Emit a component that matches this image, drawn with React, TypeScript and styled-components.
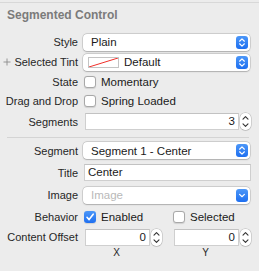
import React from "react"
import styled, { createGlobalStyle } from "styled-components"

const GlobalStyle = createGlobalStyle`
  html, body {
    margin: 0;
    padding: 0;
    background: #ececec;
    font-family: "Liberation Sans", Arial, sans-serif;
    -webkit-font-smoothing: antialiased;
  }
`

const Chevrons = ({ single }: { single?: boolean }) => (
  <svg width="12" height="13" viewBox="0 0 12 13">
    {!single && (
      <path d="M3.6 5.2 L6 2.9 L8.4 5.2" fill="none" stroke="#fff" strokeWidth="1.2" strokeLinecap="round" strokeLinejoin="round" />
    )}
    <path
      d={single ? "M3.6 5.4 L6 7.7 L8.4 5.4" : "M3.6 7.8 L6 10.1 L8.4 7.8"}
      fill="none"
      stroke="#fff"
      strokeWidth="1.2"
      strokeLinecap="round"
      strokeLinejoin="round"
    />
  </svg>
)

const StepperArrows = () => (
  <svg width="11" height="17" viewBox="0 0 11 17">
    <path d="M3 6.2 L5.5 3.7 L8 6.2" fill="none" stroke="#333" strokeWidth="1.1" strokeLinecap="round" strokeLinejoin="round" />
    <path d="M3 10.8 L5.5 13.3 L8 10.8" fill="none" stroke="#333" strokeWidth="1.1" strokeLinecap="round" strokeLinejoin="round" />
  </svg>
)

const PlusIcon = () => (
  <svg width="8" height="8" viewBox="0 0 8 8">
    <path d="M4 0.5 V7.5 M0.5 4 H7.5" stroke="#8c8c8c" strokeWidth="0.9" />
  </svg>
)

const CheckMark = () => (
  <svg width="12" height="12" viewBox="0 0 12 12">
    <path d="M3 6.3 L5.1 8.6 L9.2 3.2" fill="none" stroke="#fff" strokeWidth="1.6" strokeLinecap="round" strokeLinejoin="round" />
  </svg>
)

const TintSwatch = () => (
  <Swatch>
    <svg width="29" height="9" viewBox="0 0 29 9">
      <line x1="0" y1="9" x2="29" y2="0" stroke="#f0302a" strokeWidth="1" />
    </svg>
  </Swatch>
)

const Popup = ({ children, combo, placeholder }: { children: React.ReactNode; combo?: boolean; placeholder?: boolean }) => (
  <PopupBox $placeholder={placeholder}>
    <PopupText>{children}</PopupText>
    <Indicator>
      <Chevrons single={combo} />
    </Indicator>
  </PopupBox>
)

const Checkbox = ({ checked, label }: { checked?: boolean; label: string }) => (
  <CheckRow>
    <Box $checked={checked}>{checked && <CheckMark />}</Box>
    <span>{label}</span>
  </CheckRow>
)

const NumberField = ({ value }: { value: string }) => (
  <FieldGroup>
    <TextField $align="right">{value}</TextField>
    <Stepper>
      <StepperArrows />
    </Stepper>
  </FieldGroup>
)

const App = () => (
  <>
    <GlobalStyle />
    <Panel>
      <Header>Segmented Control</Header>

      <Row $h={20}>
        <Label>Style</Label>
        <Popup>Plain</Popup>
      </Row>
      <Row $h={20}>
        <Label>
          <PlusIcon />
          Selected Tint
        </Label>
        <Popup>
          <TintSwatch />
          Default
        </Popup>
      </Row>
      <Row $h={19}>
        <Label>State</Label>
        <Checkbox label="Momentary" />
      </Row>
      <Row $h={20}>
        <Label>Drag and Drop</Label>
        <Checkbox label="Spring Loaded" />
      </Row>
      <Row $h={21}>
        <Label>Segments</Label>
        <NumberField value="3" />
      </Row>

      <Separator />

      <Row $h={21}>
        <Label>Segment</Label>
        <Popup>Segment 1 - Center</Popup>
      </Row>
      <Row $h={23}>
        <Label>Title</Label>
        <TextField>Center</TextField>
      </Row>
      <Row $h={22}>
        <Label>Image</Label>
        <Popup combo placeholder>
          Image
        </Popup>
      </Row>
      <Row $h={21}>
        <Label>Behavior</Label>
        <Pair>
          <Checkbox checked label="Enabled" />
          <Checkbox label="Selected" />
        </Pair>
      </Row>
      <Row $h={20}>
        <Label>Content Offset</Label>
        <Pair>
          <NumberField value="0" />
          <NumberField value="0" />
        </Pair>
      </Row>
      <Row $h={10}>
        <span />
        <Pair>
          <AxisLabel>X</AxisLabel>
          <AxisLabel>Y</AxisLabel>
        </Pair>
      </Row>
    </Panel>
  </>
)

export default App

const Panel = styled.div`
  margin-top: 2px;
  border-top: 1px solid #d8d8d8;
  padding: 0 8px 0 0;
  display: flex;
  flex-direction: column;
`

const Header = styled.div`
  padding: 5px 0 0 7px;
  height: 14px;
  line-height: 14px;
  margin-bottom: 10px;
  font-size: 12px;
  font-weight: bold;
  color: #7b7b7b;
`

const Row = styled.div<{ $h: number }>`
  display: grid;
  grid-template-columns: 78px 1fr;
  column-gap: 5px;
  align-items: center;
  height: ${p => p.$h}px;
`

const Label = styled.div`
  display: flex;
  align-items: center;
  justify-content: flex-end;
  gap: 3px;
  font-size: 11px;
  color: #262626;
  white-space: nowrap;
`

const PopupBox = styled.div<{ $placeholder?: boolean }>`
  display: flex;
  align-items: center;
  height: 17px;
  margin-right: 1px;
  padding-left: 8px;
  border-radius: 4px;
  background: #fff;
  box-shadow: 0 0 0 0.5px rgba(0, 0, 0, 0.2), 0 0.5px 1.5px rgba(0, 0, 0, 0.18);
  font-size: 11.5px;
  color: ${p => (p.$placeholder ? "#b9b9b9" : "#1a1a1a")};
`

const PopupText = styled.div`
  flex: 1;
  display: flex;
  align-items: center;
  gap: 5px;
  white-space: nowrap;
`

const Indicator = styled.div`
  width: 12px;
  height: 13px;
  margin-right: 2px;
  border-radius: 3px;
  background: linear-gradient(#4c97f8, #1e6ff0);
  display: flex;
`

const Swatch = styled.div`
  width: 29px;
  height: 9px;
  margin-left: -3px;
  border: 0.5px solid #c4c4c4;
  background: #fff;
  display: flex;
`

const CheckRow = styled.div`
  display: flex;
  align-items: center;
  gap: 5px;
  font-size: 11.5px;
  color: #1a1a1a;
  white-space: nowrap;
  margin-left: 1px;
`

const Box = styled.div<{ $checked?: boolean }>`
  width: 12px;
  height: 12px;
  box-sizing: border-box;
  border-radius: 3px;
  background: ${p => (p.$checked ? "linear-gradient(#4c97f8, #1e6ff0)" : "#fff")};
  border: ${p => (p.$checked ? "none" : "0.5px solid #a8a8a8")};
  box-shadow: 0 0.5px 1px rgba(0, 0, 0, 0.12);
  display: flex;
`

const FieldGroup = styled.div`
  display: flex;
  align-items: center;
  margin-left: 1px;
`

const TextField = styled.div<{ $align?: "left" | "right" }>`
  flex: 1;
  height: 17px;
  box-sizing: border-box;
  padding: 0 3px;
  margin-left: 1px;
  background: #fff;
  border: 1px solid #cfcfcf;
  border-top-color: #c2c2c2;
  font-size: 11.5px;
  color: #1a1a1a;
  line-height: 15px;
  text-align: ${p => p.$align || "left"};
`

const Stepper = styled.div`
  width: 11px;
  height: 17px;
  margin-left: 1px;
  border-radius: 5px;
  background: #fff;
  box-shadow: 0 0 0 0.5px rgba(0, 0, 0, 0.22), 0 0.5px 1px rgba(0, 0, 0, 0.15);
  display: flex;
`

const Separator = styled.div`
  height: 1px;
  margin: 5px 2px 2px 7px;
  background: #d4d4d4;
`

const Pair = styled.div`
  display: grid;
  grid-template-columns: 1fr 1fr;
  column-gap: 10px;
`

const AxisLabel = styled.div`
  font-size: 10px;
  color: #262626;
  text-align: center;
  padding-right: 12px;
`
